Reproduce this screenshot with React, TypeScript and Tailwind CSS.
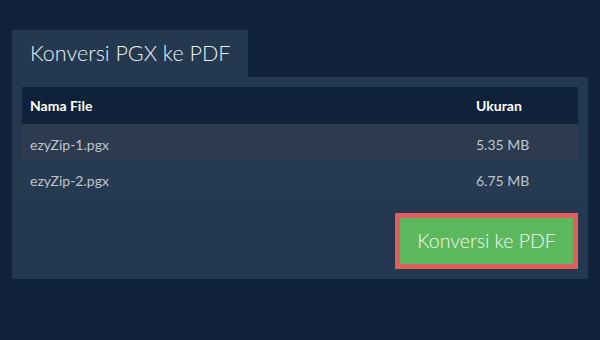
const files = [
  { name: 'ezyZip-1.pgx', size: '5.35 MB', odd: true },
  { name: 'ezyZip-2.pgx', size: '6.75 MB', odd: false },
]

export default function App() {
  return (
    <div
      className="w-[600px] h-[340px] bg-[#11233a] pt-[30px] px-3"
      style={{ fontFamily: 'Lato, "Open Sans", sans-serif' }}
    >
      <div className="inline-flex h-[47px] w-[236px] items-center bg-[#243850] pl-[18px]">
        <h1 className="text-[21.5px] font-light text-[#eef1f4] leading-none">Konversi PGX ke PDF</h1>
      </div>
      <div className="bg-[#243850] p-[10px]">
        <table className="w-full border-collapse text-[14px]">
          <thead>
            <tr className="h-[37px] bg-[#10223a] text-left text-white">
              <th className="pl-2 font-bold">Nama File</th>
              <th className="w-[102px] font-bold">Ukuran</th>
            </tr>
          </thead>
          <tbody>
            {files.map((f) => (
              <tr
                key={f.name}
                className={`h-[36.5px] text-[#bfc6ce] ${f.odd ? 'bg-[#2c3b4f]' : 'bg-[#263a52]'}`}
              >
                <td className="pl-2 pt-1">{f.name}</td>
                <td className="pt-1">{f.size}</td>
              </tr>
            ))}
          </tbody>
        </table>
        <div className="flex justify-end pt-4">
          <button className="h-[56px] w-[183px] border-[5px] border-[#df5f5c] bg-[#5cb85c] text-[19.5px] font-light text-[#f4f8f4]">
            Konversi ke PDF
          </button>
        </div>
      </div>
    </div>
  )
}
